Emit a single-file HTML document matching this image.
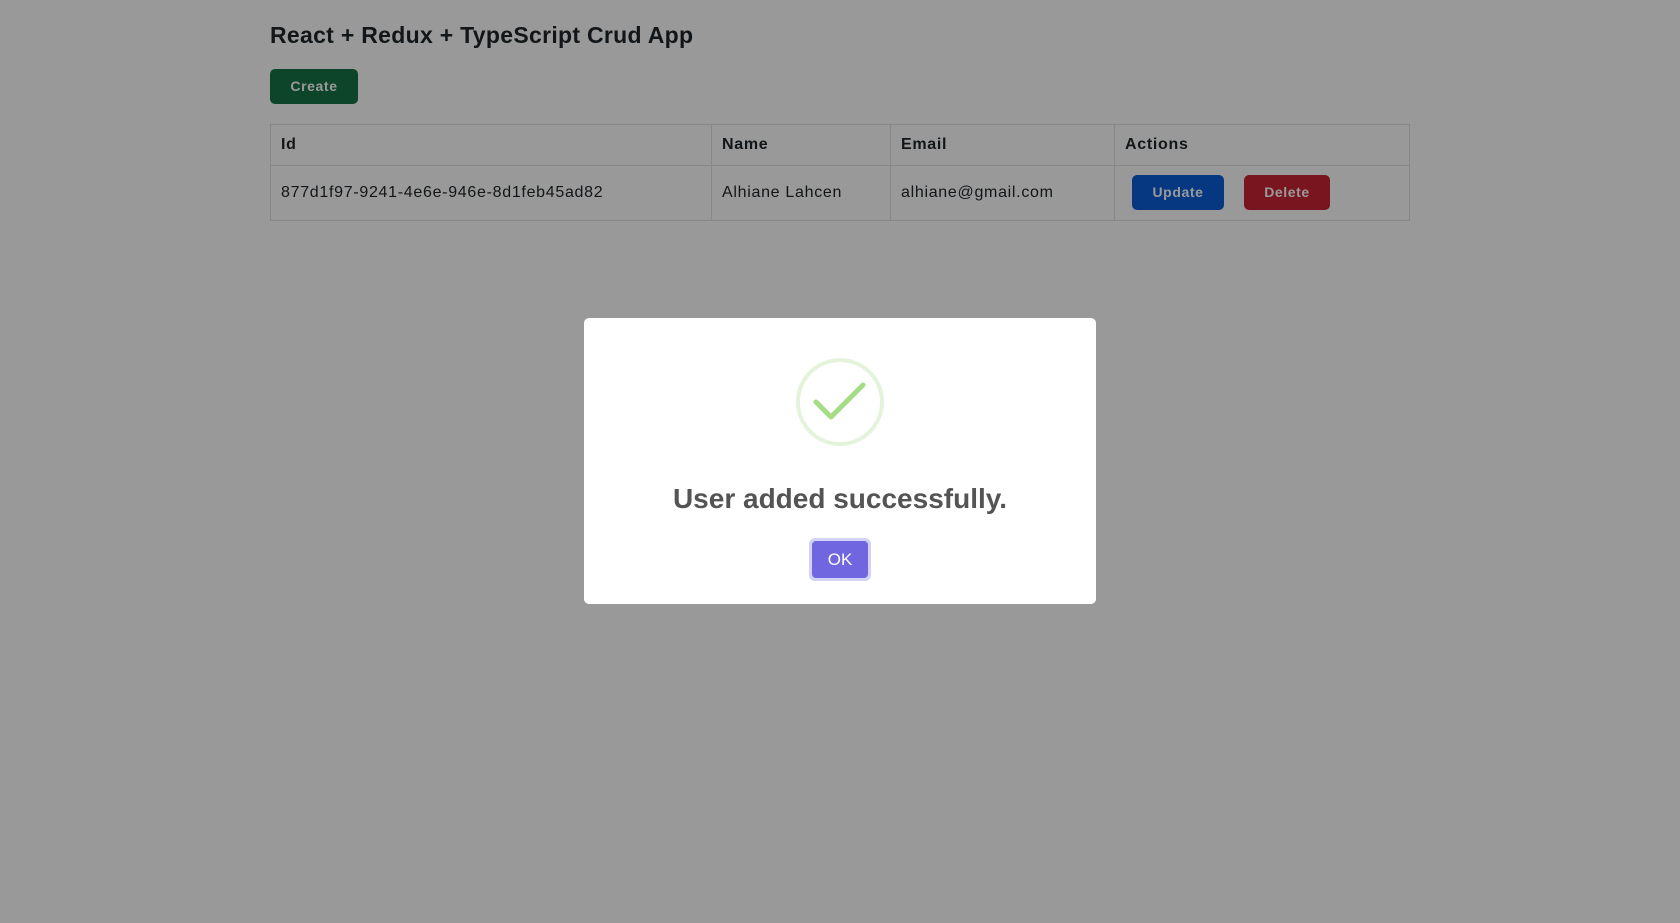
<!DOCTYPE html>
<html><head><meta charset="utf-8"><style>
body{margin:0;width:1680px;height:923px;background:#fff;font-family:"Liberation Sans",sans-serif;position:relative;overflow:hidden}
.wrap{position:absolute;left:270px;top:0;width:1140px;color:#212529}
h2{position:absolute;top:22px;left:0;margin:0;font-size:23px;font-weight:bold;letter-spacing:.3px;white-space:nowrap}
.btn{position:absolute;color:#fff;border-radius:5px;font-size:14px;font-weight:bold;letter-spacing:.6px;text-align:center;box-sizing:border-box}
table{position:absolute;top:124px;left:0;width:1140px;border-collapse:collapse;font-size:16px;letter-spacing:.7px}
td,th{border:1px solid #dee2e6;padding:0 10px;text-align:left}
th{height:40px}
td{height:54px}
.ov{position:absolute;inset:0;background:rgba(0,0,0,.4)}
.modal{position:absolute;left:584px;top:318px;width:512px;height:286px;background:#fff;border-radius:5px}
</style></head><body>
<div class="wrap">
<h2>React + Redux + TypeScript Crud App</h2>
<div class="btn" style="left:0;top:69px;width:88px;height:35px;line-height:35px;background:#157347">Create</div>
<table>
<tr><th style="width:420px">Id</th><th style="width:158px">Name</th><th style="width:203px">Email</th><th>Actions</th></tr>
<tr><td>877d1f97-9241-4e6e-946e-8d1feb45ad82</td><td>Alhiane Lahcen</td><td>alhiane@gmail.com</td><td></td></tr>
</table>
<div class="btn" style="left:862px;top:175px;width:92px;height:35px;line-height:35px;background:#0b5ed7">Update</div>
<div class="btn" style="left:974px;top:175px;width:86px;height:35px;line-height:35px;background:#c82333">Delete</div>
</div>
<div class="ov"></div>
<div class="modal">
<svg style="position:absolute;left:210px;top:38px" width="92" height="92" viewBox="0 0 92 92">
<circle cx="46" cy="46" r="42" fill="none" stroke="rgba(165,220,134,.3)" stroke-width="4"/>
<path d="M22 46 L37 61 L69 29" fill="none" stroke="#a5dc86" stroke-width="5" stroke-linecap="round" stroke-linejoin="round"/>
</svg>
<div style="position:absolute;top:165px;left:0;width:512px;text-align:center;font-size:28px;font-weight:bold;color:#545454">User added successfully.</div>
<div style="position:absolute;left:225px;top:220px;width:62px;height:43px;border-radius:6px;background:rgba(112,102,224,.3)"></div>
<div style="position:absolute;left:228px;top:223px;width:56px;height:37px;line-height:37px;border-radius:4px;background:#7066e0;color:#fff;text-align:center;font-size:17px">OK</div>
</div>
</body></html>
